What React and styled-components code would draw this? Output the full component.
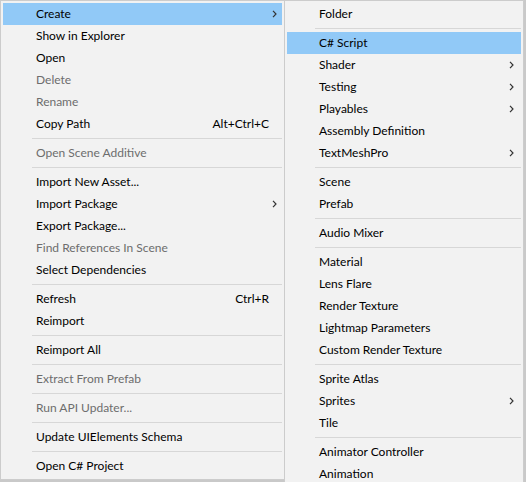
import styled, { createGlobalStyle } from "styled-components";

const GlobalStyle = createGlobalStyle`
  html, body {
    margin: 0;
    padding: 0;
    background: #c9c9c9;
    overflow: hidden;
  }
  body {
    font-family: Lato, "Noto Sans", sans-serif;
    font-size: 12px;
  }
`;

const leftItems = [
  { label: "Create", sub: true, active: true },
  { label: "Show in Explorer" },
  { label: "Open" },
  { label: "Delete", disabled: true },
  { label: "Rename", disabled: true },
  { label: "Copy Path", shortcut: "Alt+Ctrl+C" },
  "-",
  { label: "Open Scene Additive", disabled: true },
  "-",
  { label: "Import New Asset..." },
  { label: "Import Package", sub: true },
  { label: "Export Package..." },
  { label: "Find References In Scene", disabled: true },
  { label: "Select Dependencies" },
  "-",
  { label: "Refresh", shortcut: "Ctrl+R" },
  { label: "Reimport" },
  "-",
  { label: "Reimport All" },
  "-",
  { label: "Extract From Prefab", disabled: true },
  "-",
  { label: "Run API Updater...", disabled: true },
  "-",
  { label: "Update UIElements Schema" },
  "-",
  { label: "Open C# Project" },
];

const rightItems = [
  { label: "Folder" },
  "-",
  { label: "C# Script", active: true },
  { label: "Shader", sub: true },
  { label: "Testing", sub: true },
  { label: "Playables", sub: true },
  { label: "Assembly Definition" },
  { label: "TextMeshPro", sub: true },
  "-",
  { label: "Scene" },
  { label: "Prefab" },
  "-",
  { label: "Audio Mixer" },
  "-",
  { label: "Material" },
  { label: "Lens Flare" },
  { label: "Render Texture" },
  { label: "Lightmap Parameters" },
  { label: "Custom Render Texture" },
  "-",
  { label: "Sprite Atlas" },
  { label: "Sprites", sub: true },
  { label: "Tile" },
  "-",
  { label: "Animator Controller" },
  { label: "Animation" },
];

const Chevron = () => (
  <svg width="5" height="8" viewBox="0 0 5 8">
    <polyline points="1,0.8 4,4 1,7.2" fill="none" stroke="#333" strokeWidth="1.2" />
  </svg>
);

const Menu = ({ items, width, gutter, arrowPad, overlap }) => (
  <MenuBox $width={width} $overlap={overlap}>
    {items.map((it, i) =>
      it === "-" ? (
        <Separator key={i} $gutter={gutter - 4} />
      ) : (
        <Item key={i} $active={it.active} $disabled={it.disabled} $gutter={gutter} $arrowPad={arrowPad}>
          <Label>{it.label}</Label>
          {it.shortcut && <Shortcut>{it.shortcut}</Shortcut>}
          {it.sub && (
            <Arrow>
              <Chevron />
            </Arrow>
          )}
        </Item>
      )
    )}
  </MenuBox>
);

export default function App() {
  return (
    <>
      <GlobalStyle />
      <Page>
        <Menu items={leftItems} width={285} gutter={33} arrowPad={5} />
        <Menu items={rightItems} width={240} gutter={32} arrowPad={7} overlap />
      </Page>
    </>
  );
}

const Page = styled.div`
  display: flex;
  align-items: flex-start;
  height: 482px;
`;

const MenuBox = styled.div`
  box-sizing: border-box;
  width: ${(p) => p.$width}px;
  flex-shrink: 0;
  margin-left: ${(p) => (p.$overlap ? "-1px" : "0")};
  background: #f2f2f2;
  border: 1px solid #cccccc;
  padding: 2px;
  display: flex;
  flex-direction: column;
`;

const Item = styled.div`
  box-sizing: border-box;
  height: 22px;
  display: flex;
  align-items: center;
  padding-left: ${(p) => p.$gutter}px;
  padding-right: ${(p) => p.$arrowPad}px;
  padding-bottom: 1px;
  background: ${(p) => (p.$active ? "#91c9f7" : "transparent")};
  color: ${(p) => (p.$disabled ? "#6d6d6d" : "#000")};
  white-space: nowrap;
`;

const Label = styled.span`
  flex: 1;
`;

const Shortcut = styled.span`
  margin-right: 8px;
`;

const Arrow = styled.span`
  display: flex;
  align-items: center;
  margin-left: 8px;
`;

const Separator = styled.div`
  height: 7px;
  display: flex;
  align-items: center;
  padding-left: ${(p) => p.$gutter}px;
  &::after {
    content: "";
    flex: 1;
    height: 1px;
    background: #d7d7d7;
  }
`;
